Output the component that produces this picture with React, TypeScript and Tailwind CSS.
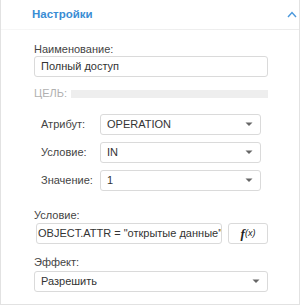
import React from "react";

const Caret = () => (
  <svg width="8" height="5" viewBox="0 0 8 5" className="shrink-0">
    <path d="M0.5 0.5 L7.5 0.5 L4 4 Z" fill="#666" />
  </svg>
);

const Select = ({ value, className = "" }: { value: string; className?: string }) => (
  <div
    className={
      "flex h-[21px] items-center justify-between rounded-[3px] border border-[#dadada] bg-white pl-[6px] pr-[7px] text-[#333] " +
      className
    }
  >
    <span>{value}</span>
    <Caret />
  </div>
);

export default function App() {
  return (
    <div
      className="h-[305px] w-[300px] border-x border-b border-[#e2e2e2] bg-white text-[11px] leading-[13px] text-[#444]"
      style={{ fontFamily: '"Liberation Sans", Arial, sans-serif' }}
    >
      <div className="flex h-[29px] items-center justify-between pl-[31px] pr-[2px]">
        <span className="text-[11.5px] font-bold text-[#3a8dd4]">Настройки</span>
        <svg width="10" height="7" viewBox="0 0 10 7">
          <path d="M1 6 L5 1.5 L9 6" fill="none" stroke="#4a98dc" strokeWidth="1.4" />
        </svg>
      </div>
      <div className="h-px bg-gradient-to-r from-[#f7f7f7] via-[#efefef] to-[#ececec]" />
      <div className="flex flex-col pl-[33px] pr-[31px]">
        <div className="mt-[13px]">Наименование:</div>
        <div className="flex h-[21px] items-center rounded-[3px] border border-[#dadada] pl-[6px] text-[#333]">
          Полный доступ
        </div>
        <div className="mt-[10px] flex h-[13px] items-center gap-[4px]">
          <span className="text-[#b0b0b0]">ЦЕЛЬ:</span>
          <div className="h-[8px] flex-1 bg-[#eeeeee]" />
        </div>
        <div className="mt-[14px] flex flex-col gap-[7px] pl-[7px] pr-[7px]">
          <div className="flex items-center">
            <span className="w-[59px]">Атрибут:</span>
            <Select value="OPERATION" className="flex-1" />
          </div>
          <div className="flex items-center">
            <span className="w-[59px]">Условие:</span>
            <Select value="IN" className="flex-1" />
          </div>
          <div className="flex items-center">
            <span className="w-[59px]">Значение:</span>
            <Select value="1" className="flex-1" />
          </div>
        </div>
        <div className="mt-[18px]">Условие:</div>
        <div className="mt-px flex gap-[6px] pl-[2px]">
          <div className="flex h-[21px] flex-1 items-center overflow-hidden whitespace-nowrap rounded-[3px] border border-[#dadada] pl-px text-[#333]">
            OBJECT.ATTR = "открытые данные"
          </div>
          <div className="flex h-[21px] w-[40px] items-center justify-center rounded-[3px] border border-[#dadada] text-[#222]">
            <span
              className="text-[13px] font-bold italic"
              style={{ fontFamily: '"Liberation Serif", serif' }}
            >
              f
            </span>
            <span className="text-[9px] italic">(x)</span>
          </div>
        </div>
        <div className="mt-[12px]">Эффект:</div>
        <Select value="Разрешить" className="mt-[2px]" />
      </div>
    </div>
  );
}
